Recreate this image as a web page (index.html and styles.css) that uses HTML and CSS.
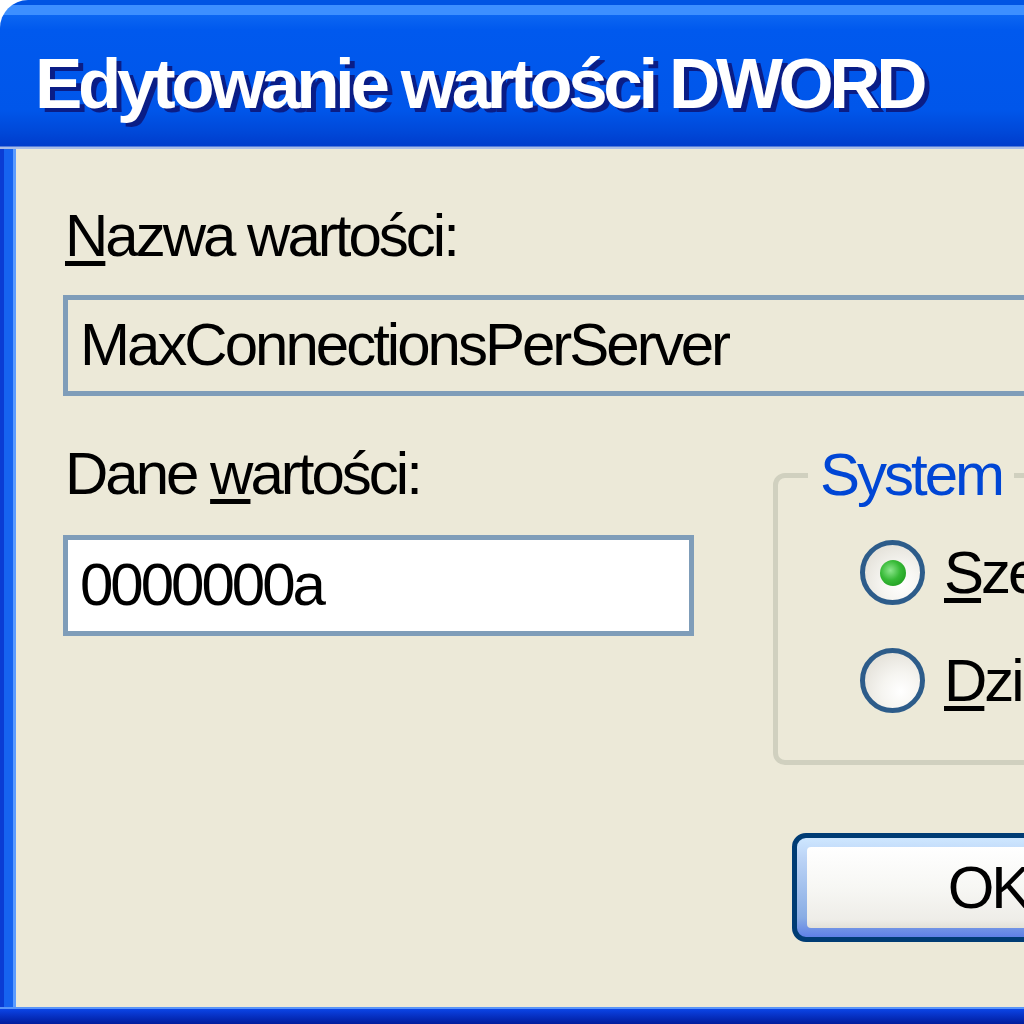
FILE: index.html
```html
<!DOCTYPE html>
<html lang="pl">

<head>
    <meta charset="UTF-8">
    <meta name="viewport" content="width=device-width, initial-scale=1.0">
    <link rel="stylesheet" href="styles.css">
    <title>Edytowanie wartości DWORD</title>
</head>

<body>
    <div class="window">
        <div class="titlebar">
            <span class="title">Edytowanie wartości DWORD</span>
        </div>

        <div class="frame">
            <div class="edge-left"></div>

            <div class="client">
                <label class="label" for="nazwa"><u>N</u>azwa wartości:</label>
                <div class="field name" id="nazwa">MaxConnectionsPerServer</div>

                <div class="row">
                    <div class="col">
                        <label class="label" for="dane">Dane <u>w</u>artości:</label>
                        <div class="field value" id="dane">0000000a</div>
                    </div>

                    <fieldset class="group">
                        <legend>System</legend>
                        <label class="radio first">
                            <span class="dot checked"></span>
                            <span><u>S</u>zesnastkowy</span>
                        </label>
                        <label class="radio">
                            <span class="dot"></span>
                            <span><u>D</u>ziesiętny</span>
                        </label>
                    </fieldset>
                </div>

                <div class="actions">
                    <button class="btn default"><span class="face">OK</span></button>
                    <button class="btn"><span class="face">Anuluj</span></button>
                </div>
            </div>
        </div>

        <div class="edge-bottom"></div>
    </div>
</body>

</html>
```

FILE: styles.css
```css
body {
    margin: 0;
    background-color: #fff;
    overflow: hidden;
}

.window {
    width: 1260px;
    display: flex;
    flex-direction: column;
    border-top-left-radius: 28px;
    overflow: hidden;
}

/* barra de título */
.titlebar {
    height: 149px;
    box-sizing: border-box;
    padding: 48px 0 0 35px;
    background: linear-gradient(to bottom,
            #0054e3 0, #0054e3 5px,
            #3d8fff 5px, #3d8fff 15px,
            #0c66f2 15px, #0059ee 30px,
            #0056ea 110px, #0048d8 132px,
            #003ccc 146px, #a8bce8 147px, #a8bce8 149px);
}

.title {
    font-family: "Liberation Sans", Arial, sans-serif;
    font-weight: bold;
    font-size: 71px;
    line-height: 71px;
    letter-spacing: -4.4px;
    color: #fff;
    text-shadow: 5px 4px 0 #0a1d86;
    white-space: nowrap;
}

.frame {
    display: flex;
}

.edge-left {
    width: 16px;
    flex: none;
    background: linear-gradient(to right, #0a3cd4 0, #0a3cd4 4px, #1663f0 4px, #1663f0 13px, #5c9cff 13px);
}

.edge-bottom {
    height: 17px;
    background: linear-gradient(to bottom, #5a95f8 0, #5a95f8 2px, #0b45e6 2px, #0733c8 8px, #001c9c 17px);
}

/* zona de contenido */
.client {
    flex: 1;
    height: 858px;
    box-sizing: border-box;
    padding: 57px 0 0 47px;
    background-color: #ece9d8;
    font-family: "Liberation Sans", Arial, sans-serif;
    font-size: 60px;
    line-height: 60px;
    letter-spacing: -3px;
    color: #000;
}

u {
    text-decoration-thickness: 5px;
    text-underline-offset: 5px;
}

.label {
    display: block;
    padding-left: 2px;
    white-space: nowrap;
}

.field {
    box-sizing: border-box;
    height: 101px;
    border: 5px solid #7f9db9;
    padding: 15px 12px 0;
    white-space: nowrap;
}

.name {
    width: 1150px;
    margin-top: 29px;
    background-color: #ece9d8;
}

.row {
    display: flex;
    align-items: flex-start;
    margin-top: 48px;
}

.col {
    width: 631px;
    flex: none;
}

.value {
    margin-top: 31px;
    background-color: #fff;
}

.group {
    width: 420px;
    flex: none;
    margin: 1px 0 0 79px;
    padding: 0 0 47px 30px;
    border: 5px solid #d0d0bf;
    border-radius: 12px;
}

.group legend {
    padding: 0 12px;
    color: #0046d5;
}

.radio {
    display: flex;
    align-items: center;
    gap: 19px;
    height: 65px;
    margin: 43px 0 0 52px;
    white-space: nowrap;
}

.radio.first {
    margin-top: 35px;
}

.dot {
    width: 65px;
    height: 65px;
    flex: none;
    box-sizing: border-box;
    border: 5px solid #2d5c8a;
    border-radius: 50%;
    background: radial-gradient(circle at 65% 70%, #fff 0, #f6f5f1 35%, #dcd9cf 100%);
    display: grid;
    place-items: center;
}

.dot.checked::after {
    content: "";
    width: 26px;
    height: 26px;
    border-radius: 50%;
    background: radial-gradient(circle at 40% 40%, #8de68d 0, #36b936 45%, #168f16 100%);
}

/* botones */
.actions {
    display: flex;
    gap: 32px;
    margin: 68px 0 0 729px;
}

.btn {
    width: 392px;
    height: 109px;
    box-sizing: border-box;
    padding: 9px 10px;
    border: 5px solid #003c74;
    border-radius: 14px;
    background: linear-gradient(to bottom, #cee7ff 0, #bcd4f6 20%, #89ade4 80%, #5f80e6 100%);
    font: inherit;
    letter-spacing: -3px;
    color: #000;
    cursor: pointer;
}

.face {
    display: flex;
    align-items: center;
    justify-content: center;
    height: 100%;
    border-radius: 4px;
    background: linear-gradient(to bottom, #fff 0, #f7f7f4 50%, #eeede8 90%, #e3e1d8 100%);
}
```
